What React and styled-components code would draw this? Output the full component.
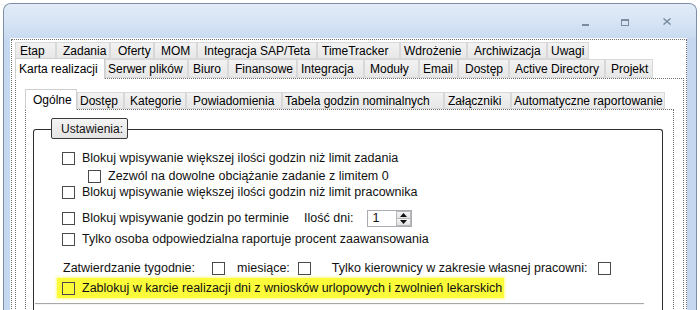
import React from 'react'
import styled, { createGlobalStyle } from 'styled-components'

const Global = createGlobalStyle`
  html, body { margin: 0; padding: 0; background: #ffffff; }
  body { padding: 3px 0 0 3px; font-family: "Liberation Sans", Arial, sans-serif; font-size: 12.5px; color: #111; }
`

const Window = styled.div`
  box-sizing: border-box;
  width: 694px;
  height: 310px;
  border: 1px solid #7d8ea5;
  border-bottom: none;
  border-radius: 8px 8px 0 0;
  background: #c5d8ef;
  overflow: hidden;
  display: flex;
  flex-direction: column;
`

const TitleBar = styled.div`
  height: 34px;
  flex: none;
  display: flex;
  justify-content: flex-end;
  align-items: center;
  padding-right: 7px;
  background: linear-gradient(#e2ebf7, #d6e4f4 55%, #c9dbf0);
`

const CtrlButton = styled.div`
  width: ${p => p.w}px;
  height: 20px;
  display: flex;
  align-items: center;
  justify-content: center;
  padding-top: ${p => p.pt || 0}px;
`

const Frame = styled.div`
  flex: 1;
  display: flex;
  padding: 0 9px 0 6px;
  min-height: 0;
`

const Client = styled.div`
  flex: 1;
  background: #ffffff;
  padding: 1px 0 0 1px;
  display: flex;
  min-width: 0;
`

const Focus = styled.div`
  flex: 1;
  border: 1px dotted #6f6f6f;
  border-bottom: none;
  padding: 2px 2px 0 3px;
  display: flex;
  flex-direction: column;
`

const TabRow = styled.div`
  display: flex;
  align-items: flex-end;
  height: ${p => p.h}px;
  position: relative;
  z-index: 1;
`

const Tab = styled.div`
  box-sizing: border-box;
  width: ${p => p.w}px;
  height: ${p => (p.sel ? p.h + 2 : p.h)}px;
  margin-bottom: ${p => (p.sel ? -1 : 0)}px;
  padding-left: ${p => p.pl}px;
  display: flex;
  align-items: center;
  white-space: nowrap;
  overflow: hidden;
  font-size: 12px;
  color: #000;
  background: ${p => (p.sel ? '#ffffff' : 'linear-gradient(#f2f2f2, #e7e7e7)')};
  border: 1px solid ${p => (p.sel ? '#cfcfcf' : '#d8d8d8')};
  border-bottom: ${p => (p.sel ? 'none' : '1px solid #d8d8d8')};
`

const Page = styled.div`
  flex: 1;
  border: 1px dotted #6f6f6f;
  border-bottom: none;
  padding: ${p => p.pad};
  display: flex;
  flex-direction: column;
  background: #ffffff;
`

const InnerStrip = styled.div`
  display: flex;
  align-items: flex-end;
  height: 21px;
  position: relative;
  z-index: 1;
`

const Group = styled.div`
  position: relative;
  margin-top: 11px;
  border: 1px solid #2e2e2e;
  border-radius: 3px;
  border-bottom: none;
  padding: 20px 9px 0 0;
  flex: 1;
  display: flex;
  flex-direction: column;
`

const Legend = styled.div`
  position: absolute;
  top: -12px;
  left: 17px;
  box-sizing: border-box;
  width: 77px;
  height: 21px;
  padding-left: 9px;
  display: flex;
  align-items: center;
  font-size: 12px;
  white-space: nowrap;
  border: 1px solid #3a3a3a;
  border-radius: 2px;
  background: linear-gradient(#f4f4f4, #e3e3e3);
`

const Row = styled.label`
  display: flex;
  align-items: center;
  height: 16px;
  margin-top: ${p => p.mt || 0}px;
  padding-left: ${p => p.indent}px;
  white-space: nowrap;
`

const Box = styled.span`
  box-sizing: border-box;
  width: 13px;
  height: 13px;
  flex: none;
  border: 1px solid #4a4a4a;
  background: ${p => (p.clear ? 'transparent' : '#ffffff')};
  margin-right: ${p => (p.mr === undefined ? 7 : p.mr)}px;
  margin-left: ${p => p.ml || 0}px;
`

const Text = styled.span`
  margin-left: ${p => p.ml || 0}px;
`

const Marker = styled.span`
  display: inline-flex;
  align-items: center;
  height: 20px;
  margin-left: -5px;
  padding: 0 2px 0 5px;
  background: #fbfb3a;
  box-shadow: 0 0 2px 1px rgba(251, 251, 58, 0.6);
`

const Spinner = styled.div`
  box-sizing: border-box;
  width: 45px;
  height: 17px;
  margin-left: 14px;
  border: 1px solid #a9acb3;
  display: flex;
  background: #fff;
`

const SpinValue = styled.div`
  flex: 1;
  padding-left: 4px;
  display: flex;
  align-items: center;
`

const SpinButtons = styled.div`
  width: 15px;
  display: flex;
  flex-direction: column;
`

const SpinBtn = styled.div`
  flex: 1;
  display: flex;
  align-items: center;
  justify-content: center;
  background: linear-gradient(#f6f6f6, #e2e2e2);
  border: 1px solid #b9b9b9;
  margin: ${p => (p.up ? '0' : '-1px 0 0 0')};
`

const Separator = styled.div`
  height: 1px;
  margin: 7px 9px 0 1px;
  background: #a8a8a8;
  border-bottom: 1px solid #f4f4f4;
`

const row1 = [
  ['Etap', 41, 4], ['Zadania', 54, 6], ['Oferty', 44, 7], ['MOM', 43, 6],
  ['Integracja SAP/Teta', 120, 6], ['TimeTracker', 83, 4], ['Wdrożenie', 67, 3],
  ['Archiwizacja', 80, 6], ['Uwagi', 42, 3]
]
const row2 = [
  ['Karta realizacji', 90, 3, true], ['Serwer plików', 83, 2], ['Biuro', 40, 4],
  ['Finansowe', 69, 6], ['Integracja', 67, 3], ['Moduły', 55, 5], ['Email', 39, 3],
  ['Dostęp', 51, 6], ['Active Directory', 96, 5], ['Projekt', 48, 5]
]
const inner = [
  ['Ogólne', 52, 7, true], ['Dostęp', 47, 2], ['Kategorie', 62, 5], ['Powiadomienia', 96, 6],
  ['Tabela godzin nominalnych', 162, 2], ['Załączniki', 67, 3], ['Automatyczne raportowanie', 154, 2]
]

const Arrow = ({ up }) => (
  <svg width="7" height="4" viewBox="0 0 7 4">
    <path d={up ? 'M0 4 L3.5 0 L7 4 Z' : 'M0 0 L3.5 4 L7 0 Z'} fill="#111" />
  </svg>
)

export default function App() {
  return (
    <>
      <Global />
      <Window>
        <TitleBar>
          <CtrlButton w={40} pt={8}>
            <svg width="7" height="3"><rect x="0" y="0" width="7" height="2" fill="#7b8ca2" /></svg>
          </CtrlButton>
          <CtrlButton w={40} pt={2}>
            <svg width="8" height="7"><rect x="0.5" y="0.5" width="7" height="6" fill="none" stroke="#7b8ca2" /><rect x="0" y="0" width="8" height="2" fill="#7b8ca2" /></svg>
          </CtrlButton>
          <CtrlButton w={44}>
            <svg width="8" height="7" viewBox="0 0 8 7"><path d="M0.5 0.5 L7.5 6.5 M7.5 0.5 L0.5 6.5" stroke="#7b8ca2" strokeWidth="1.5" /></svg>
          </CtrlButton>
        </TitleBar>
        <Frame>
          <Client>
            <Focus>
              <TabRow h={17}>
                {row1.map(([t, w, pl]) => <Tab key={t} w={w} h={17} pl={pl}>{t}</Tab>)}
              </TabRow>
              <TabRow h={19}>
                {row2.map(([t, w, pl, sel]) => <Tab key={t} w={w} h={19} pl={pl} sel={sel}>{t}</Tab>)}
              </TabRow>
              <Page pad="9px 9px 0 9px">
                <InnerStrip>
                  {inner.map(([t, w, pl, sel]) => <Tab key={t} w={w} h={sel ? 19 : 17} pl={pl} sel={sel}>{t}</Tab>)}
                </InnerStrip>
                <Page pad="8px 10px 0 7px">
                  <Group>
                    <Legend>Ustawienia:</Legend>
                    <Row indent={28}><Box />Blokuj wpisywanie większej ilości godzin niż limit zadania</Row>
                    <Row indent={54} mt={2}><Box />Zezwól na dowolne obciążanie zadanie z limitem 0</Row>
                    <Row indent={28}><Box />Blokuj wpisywanie większej ilości godzin niż limit pracownika</Row>
                    <Row indent={28} mt={10}>
                      <Box />Blokuj wpisywanie godzin po terminie
                      <Text ml={15}>Ilość dni:</Text>
                      <Spinner>
                        <SpinValue>1</SpinValue>
                        <SpinButtons>
                          <SpinBtn up><Arrow up /></SpinBtn>
                          <SpinBtn><Arrow /></SpinBtn>
                        </SpinButtons>
                      </Spinner>
                    </Row>
                    <Row indent={28} mt={5}><Box />Tylko osoba odpowiedzialna raportuje procent zaawansowania</Row>
                    <Row indent={29} mt={13}>
                      Zatwierdzanie tygodnie:
                      <Box ml={17} mr={12} />
                      miesiące:
                      <Box ml={8} mr={21} />
                      Tylko kierownicy w zakresie własnej pracowni:
                      <Box ml={11} mr={0} />
                    </Row>
                    <Row indent={28} mt={4}>
                      <Marker><Box clear />Zablokuj w karcie realizacji dni z wniosków urlopowych i zwolnień lekarskich</Marker>
                    </Row>
                    <Separator />
                  </Group>
                </Page>
              </Page>
            </Focus>
          </Client>
        </Frame>
      </Window>
    </>
  )
}
